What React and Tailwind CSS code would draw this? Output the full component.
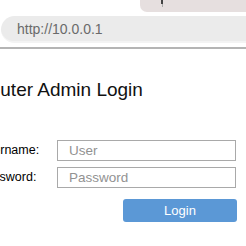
import React from 'react';

const App = () => {
  return (
    <div className="w-[246px] h-[246px] overflow-hidden bg-white font-['Liberation_Sans',Arial,sans-serif]">
      {/* Browser chrome */}
      <div className="flex justify-end h-[12px]">
        <div className="w-[106px] h-[12px] bg-[#e6dfdf] rounded-bl-[7px] pl-[21px]">
          <div className="w-[2px] h-[4px] bg-[#444]" />
          <div className="w-[1px] h-[3px] ml-[1px] bg-[#aaa]" />
        </div>
      </div>
      <div className="mt-[4px] ml-[1px] h-[27px] rounded-l-full bg-[#ebebeb] border-b-2 border-[#f3f3f3] flex items-center pl-[16px]">
        <span className="text-[14px] text-[#6a6a6a] leading-none">http://10.0.0.1</span>
      </div>
      <div className="mt-[4px] h-[2px] bg-[#b4b4b4]" />

      {/* Page */}
      <h1 className="mt-[29px] ml-[-24px] text-[19px] leading-[24px] text-[#111] whitespace-nowrap">
        Router Admin Login
      </h1>

      <div className="mt-[38px] flex flex-col gap-[6px]">
        <div className="flex items-center">
          <label className="w-[79px] ml-[-22px] shrink-0 text-[12.5px] text-black whitespace-nowrap">Username:</label>
          <input
            placeholder="User"
            className="w-[179px] h-[21px] border border-[#a9a9a9] pl-[11px] text-[13.5px] outline-none placeholder:text-[#929292]"
          />
        </div>
        <div className="flex items-center">
          <label className="w-[79px] ml-[-22px] shrink-0 text-[12.5px] text-black whitespace-nowrap">Password:</label>
          <input
            placeholder="Password"
            className="w-[179px] h-[21px] border border-[#a9a9a9] pl-[11px] text-[13.5px] outline-none placeholder:text-[#929292]"
          />
        </div>
      </div>

      <button className="mt-[11px] ml-[123px] w-[114px] h-[23px] rounded-[3px] bg-[#5b98d6] text-white text-[13px] leading-none">
        Login
      </button>
    </div>
  );
};

export default App;
